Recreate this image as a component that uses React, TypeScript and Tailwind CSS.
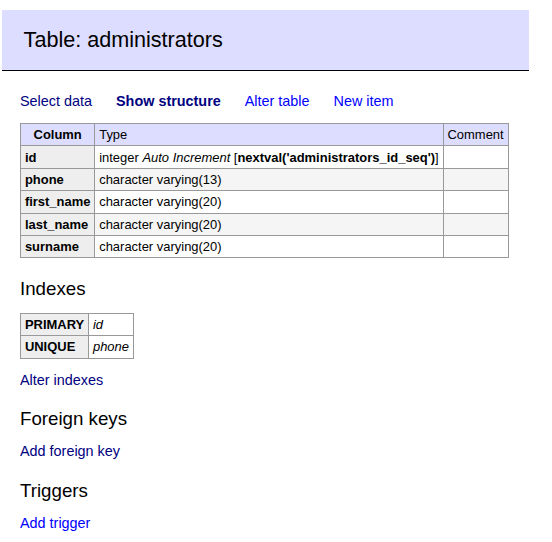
const font = { fontFamily: '"Liberation Sans", Arial, Helvetica, sans-serif' };

const columns = [
  { name: "id", type: "serial" },
  { name: "phone", type: "character varying(13)" },
  { name: "first_name", type: "character varying(20)" },
  { name: "last_name", type: "character varying(20)" },
  { name: "surname", type: "character varying(20)" },
];

const cell = "border border-[#999] px-[3.9px] py-[3.2px] leading-[15px] align-top whitespace-nowrap";

export default function App() {
  return (
    <div className="min-h-[542px] bg-white text-[14.4px] leading-[18px] text-black" style={font}>
      <h2 className="ml-[2px] mt-[10px] w-[527px] border-b border-black bg-[#ddf] px-[21.6px] py-[17px] text-[21.6px] font-normal leading-[26px]">
        Table: administrators
      </h2>

      <div className="pl-[20px]">
        <p className="mt-[21px] flex gap-[24px]">
          <a className="text-[#000080]">Select data</a>
          <a className="font-bold text-[#000080]">Show structure</a>
          <a className="text-[#0000ff]">Alter table</a>
          <a className="text-[#0000ff]">New item</a>
        </p>

        <table className="mt-[13px] border-collapse text-[12.96px]">
          <thead>
            <tr className="bg-[#ddf]">
              <th className={`${cell} text-center font-bold`}>Column</th>
              <td className={`${cell} text-left`}>Type</td>
              <td className={`${cell} text-left`}>Comment</td>
            </tr>
          </thead>
          <tbody>
            {columns.map((c, i) => (
              <tr key={c.name}>
                <th className={`${cell} bg-[#eee] text-left font-bold`}>{c.name}</th>
                <td className={`${cell} ${i % 2 === 1 ? "bg-[#f5f5f5]" : ""}`}>
                  {c.type === "serial" ? (
                    <>
                      integer <i>Auto Increment</i> [<b>nextval('administrators_id_seq')</b>]
                    </>
                  ) : (
                    c.type
                  )}
                </td>
                <td className={`${cell} ${i % 2 === 1 ? "bg-[#f5f5f5]" : ""}`}></td>
              </tr>
            ))}
          </tbody>
        </table>

        <h3 className="mt-[20px] text-[18.72px] font-normal leading-[21.5px]">Indexes</h3>
        <table className="mt-[13px] border-collapse text-[12.96px]">
          <tbody>
            <tr>
              <th className={`${cell} bg-[#eee] text-left font-bold`}>PRIMARY</th>
              <td className={cell}>
                <i>id</i>
              </td>
            </tr>
            <tr>
              <th className={`${cell} bg-[#eee] text-left font-bold`}>UNIQUE</th>
              <td className={cell}>
                <i>phone</i>
              </td>
            </tr>
          </tbody>
        </table>
        <p className="mt-[12px]">
          <a className="text-[#000080]">Alter indexes</a>
        </p>

        <h3 className="mt-[19px] text-[18.72px] font-normal leading-[21.5px]">Foreign keys</h3>
        <p className="mt-[12.5px]">
          <a className="text-[#000080]">Add foreign key</a>
        </p>

        <h3 className="mt-[20px] text-[18.72px] font-normal leading-[21.5px]">Triggers</h3>
        <p className="mt-[12.5px]">
          <a className="text-[#0000ff]">Add trigger</a>
        </p>
      </div>
    </div>
  );
}
